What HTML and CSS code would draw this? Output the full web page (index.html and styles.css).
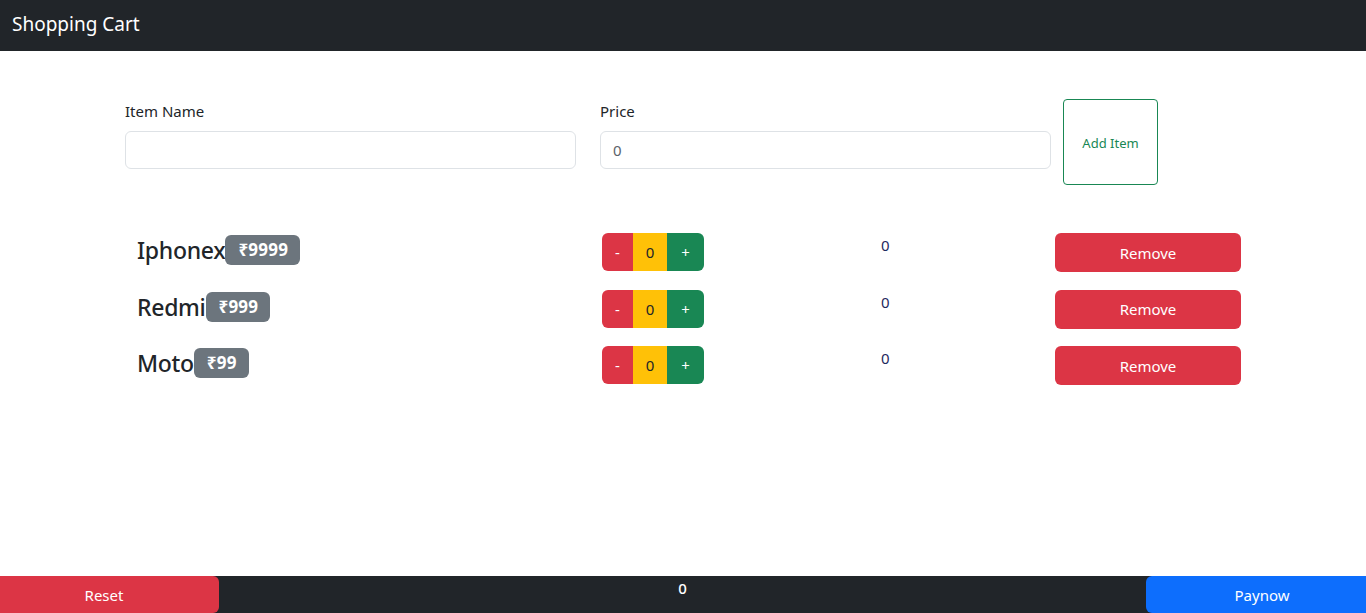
FILE: index.html
```html
<!DOCTYPE html>
<html lang="en">
<head>
<meta charset="utf-8">
<title>Shopping Cart</title>
<link rel="stylesheet" href="styles.css">
</head>
<body>
<nav class="navbar"><span class="brand">Shopping Cart</span></nav>

<main class="page">
  <form class="add-form">
    <div class="field">
      <label class="label">Item Name</label>
      <input class="input" type="text">
    </div>
    <div class="field">
      <label class="label">Price</label>
      <input class="input input-price" type="number" value="0">
    </div>
    <button type="button" class="btn-add">Add Item</button>
  </form>

  <div class="items">
    <div class="item">
      <h4 class="name">Iphonex<span class="badge">₹9999</span></h4>
      <div class="counter"><button class="c-minus">-</button><button class="c-qty">0</button><button class="c-plus">+</button></div>
      <div class="total">0</div>
      <button class="btn-remove">Remove</button>
    </div>
    <div class="item">
      <h4 class="name">Redmi<span class="badge">₹999</span></h4>
      <div class="counter"><button class="c-minus">-</button><button class="c-qty">0</button><button class="c-plus">+</button></div>
      <div class="total">0</div>
      <button class="btn-remove">Remove</button>
    </div>
    <div class="item">
      <h4 class="name">Moto<span class="badge">₹99</span></h4>
      <div class="counter"><button class="c-minus">-</button><button class="c-qty">0</button><button class="c-plus">+</button></div>
      <div class="total">0</div>
      <button class="btn-remove">Remove</button>
    </div>
  </div>
</main>

<footer class="footer">
  <button class="btn-reset">Reset</button>
  <div class="sum">0</div>
  <button class="btn-pay">Paynow</button>
</footer>
</body>
</html>
```

FILE: styles.css
```css
* { box-sizing: border-box; }
html, body { height: 100%; }
body {
  margin: 0;
  font-family: "Noto Sans", "Open Sans", sans-serif;
  font-size: 15px;
  color: #212529;
  background: #fff;
  display: flex;
  flex-direction: column;
  overflow: hidden;
}
button { font-family: inherit; cursor: pointer; }

.navbar {
  height: 51px;
  background: #212529;
  display: flex;
  align-items: center;
  padding: 0 12px;
  flex-shrink: 0;
}
.brand { color: #fff; font-size: 19px; line-height: 1; margin-top: -3px; }

.page { flex: 1; }

.add-form {
  display: flex;
  align-items: flex-start;
  margin: 48px 0 0 125px;
}
.field { width: 451px; margin-right: 24px; display: flex; flex-direction: column; }
.field:nth-child(2) { margin-right: 12px; }
.label { font-size: 15px; line-height: 22px; margin-top: 1px; margin-bottom: 9px; }
.input {
  height: 38px;
  border: 1px solid #dee2e6;
  border-radius: 6px;
  padding: 0 12px;
  font-family: inherit;
  font-size: 15px;
  color: #212529;
  outline: none;
}
.input-price { color: #5c636a; }
.input[type=number] { -moz-appearance: textfield; }
.input::-webkit-inner-spin-button { display: none; }
.btn-add {
  width: 95px;
  height: 86px;
  background: #fff;
  border: 1px solid #198754;
  border-radius: 4px;
  color: #198754;
  font-size: 13px;
  padding-top: 2px;
}

.items {
  margin: 48px 0 0 137px;
  display: flex;
  flex-direction: column;
  gap: 17.5px;
}
.item {
  display: grid;
  grid-template-columns: 465px 279px 174px 186px;
  height: 39px;
}
.name {
  margin: 0;
  height: 34px;
  font-size: 23px;
  font-weight: 500;
  display: flex;
  align-items: center;
  letter-spacing: -0.3px;
}
.badge {
  display: inline-block;
  background: #6c757d;
  color: #fff;
  font-size: 17px;
  font-weight: 700;
  line-height: 30px;
  height: 30px;
  padding: 0 12px 0 13px;
  border-radius: 6px;
  letter-spacing: 0.2px;
}
.counter { display: flex; height: 38px; }
.counter button {
  border: 0;
  height: 38px;
  font-size: 15px;
  padding: 0;
}
.c-minus { width: 31px; background: #dc3545; color: #fff; border-radius: 6px 0 0 6px; }
.c-qty { width: 34px; background: #ffc107; color: #212529; }
.c-plus { width: 37px; background: #198754; color: #fff; border-radius: 0 6px 6px 0; }
.total { color: #1f2a5e; font-size: 15px; line-height: 24px; padding-top: 0; }
.btn-remove {
  width: 186px;
  height: 39px;
  background: #dc3545;
  color: #fff;
  border: 0;
  border-radius: 6px;
  font-size: 15px;
}

.footer {
  height: 37px;
  display: flex;
  flex-shrink: 0;
  background: #212529;
}
.btn-reset {
  width: 219px;
  background: #dc3545;
  color: #fff;
  border: 0;
  border-radius: 0 6px 6px 0;
  font-size: 15px;
  padding: 0 11px 0 0;
}
.sum {
  flex: 1;
  color: #fff;
  text-align: center;
  font-size: 15px;
  font-weight: 500;
  line-height: 24px;
}
.btn-pay {
  width: 220px;
  background: #0d6efd;
  color: #fff;
  border: 0;
  border-radius: 6px 0 0 6px;
  font-size: 15px;
  padding: 0 0 0 12px;
}
```
